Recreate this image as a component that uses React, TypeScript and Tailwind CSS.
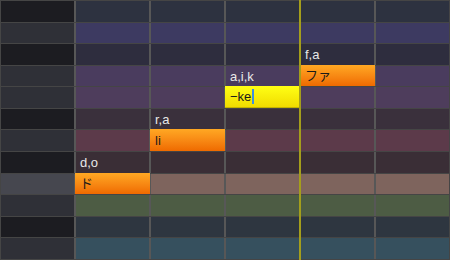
import React from 'react';

type Row = { key: string; cell: string };

const rows: Row[] = [
  { key: 'bg-[#1c1c21]', cell: 'bg-[#2d3240]' },
  { key: 'bg-[#2f3037]', cell: 'bg-[#3d3a61]' },
  { key: 'bg-[#1c1c21]', cell: 'bg-[#2e2d3e]' },
  { key: 'bg-[#2f3037]', cell: 'bg-[#4a3c5e]' },
  { key: 'bg-[#2f3037]', cell: 'bg-[#4e3d5c]' },
  { key: 'bg-[#1c1c21]', cell: 'bg-[#3a303c]' },
  { key: 'bg-[#2f3037]', cell: 'bg-[#5c3a4a]' },
  { key: 'bg-[#1c1c21]', cell: 'bg-[#3a2e36]' },
  { key: 'bg-[#46474f]', cell: 'bg-[#7e645d]' },
  { key: 'bg-[#2f3037]', cell: 'bg-[#4d5c44]' },
  { key: 'bg-[#1c1c21]', cell: 'bg-[#2e3640]' },
  { key: 'bg-[#2f3037]', cell: 'bg-[#36505e]' },
];

type Note = { row: number; col: number; lyric: string; phonemes: string; editing?: boolean };

const notes: Note[] = [
  { row: 8, col: 0, lyric: 'ド', phonemes: 'd,o' },
  { row: 6, col: 1, lyric: 'li', phonemes: 'r,a' },
  { row: 4, col: 2, lyric: '−ke', phonemes: 'a,i,k', editing: true },
  { row: 3, col: 3, lyric: 'ファ', phonemes: 'f,a' },
];

function Cell({ row, col, color }: { row: number; col: number; color: string }) {
  const note = notes.find((n) => n.row === row && n.col === col);
  const label = notes.find((n) => n.row === row + 1 && n.col === col);

  return (
    <div className={`relative w-[73px] flex items-center ${color}`}>
      {label && <span className="pl-1 text-[#e8e8e8] leading-none">{label.phonemes}</span>}
      {note && (
        <div
          className={
            note.editing
              ? 'absolute -left-px -right-px -top-px bottom-0 flex items-center pl-[5px] text-[#1a1a1a] bg-linear-to-b from-[#ffff14] to-[#f0dc00] border-b border-[#c4b400]'
              : 'absolute -left-px -right-px -top-px bottom-0 flex items-center pl-[5px] text-[#1a1a1a] bg-linear-to-b from-[#ffa823] to-[#ef6a00]'
          }
        >
          <span className="leading-none">{note.lyric}</span>
          {note.editing && <span className="ml-px w-[2px] h-[15px] bg-[#3d8fe0]" />}
        </div>
      )}
    </div>
  );
}

export default function App() {
  return (
    <div className="relative w-[450px] h-[260px] overflow-hidden bg-[#454545] p-px flex flex-col gap-px font-['Liberation_Sans','Noto_Sans_CJK_JP',sans-serif] text-[13px]">
      {rows.map((r, i) => (
        <div key={i} className="flex-1 min-h-0 flex gap-[2px] bg-[#575757]">
          {/* piano key */}
          <div className={`w-[73px] ${r.key}`} />
          {[0, 1, 2, 3, 4].map((c) => (
            <Cell key={c} row={i} col={c} color={r.cell} />
          ))}
        </div>
      ))}

      {/* playhead */}
      <div className="absolute top-0 bottom-0 left-[299px] w-[2px] bg-[#a49e1c] z-10" />
    </div>
  );
}
